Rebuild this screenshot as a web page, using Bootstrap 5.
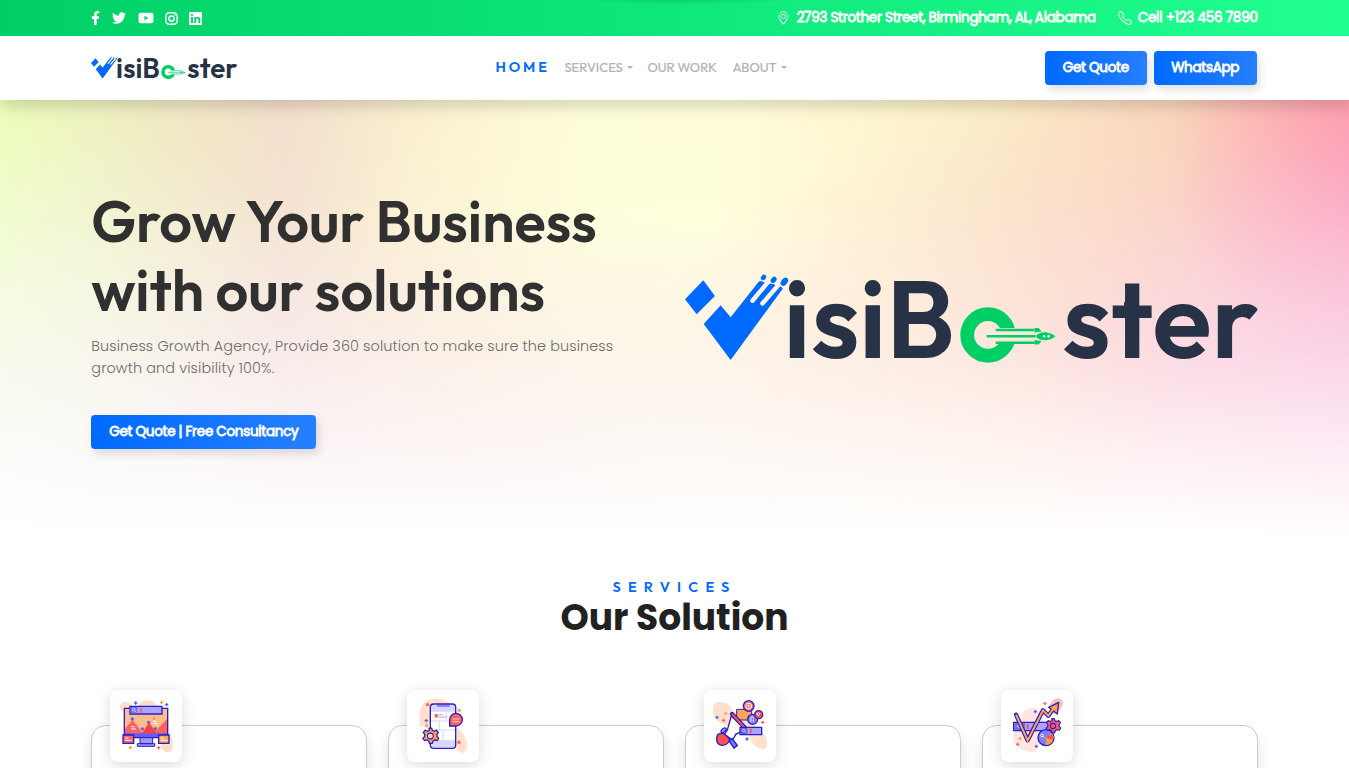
<!DOCTYPE html>
<html lang="en">
<head>
<meta charset="utf-8">
<meta name="viewport" content="width=device-width, initial-scale=1">
<title>VisiBooster</title>
<link href="https://cdn.jsdelivr.net/npm/bootstrap@5.3.0/dist/css/bootstrap.min.css" rel="stylesheet">
<style>
html{font-size:14.4px}
body{font-family:Poppins,Inter,sans-serif;color:#212121;background:#fff;overflow:hidden;height:768px}
.container{max-width:1188px}
.outfit{font-family:Outfit,Lato,sans-serif}
.topbar{height:36px;background:radial-gradient(ellipse 110px 4px at 683px 0,rgba(0,60,30,.15),transparent),linear-gradient(90deg,#00cf65,#1fff8f);color:#fff;font-size:13.5px;-webkit-text-stroke:.8px #fff;position:relative;z-index:3}
.topbar svg{fill:#fff;display:block}
.addr{letter-spacing:-.28px}
.cell{letter-spacing:-.22px}
.mainbar{height:64px;box-shadow:0 7px 14px rgba(0,0,0,.15);z-index:2}
.mainbar .nav-link{font-size:13px;color:#b3b3b3;padding:0;-webkit-text-stroke:.2px #b3b3b3}
.mainbar .nav-link.active{font-size:14.4px;font-weight:600;letter-spacing:2.9px;color:#006aff;-webkit-text-stroke:0}
.mainbar .dropdown-toggle::after{margin-left:4px;border-top-width:3px;border-left-width:3px;border-right-width:3px;vertical-align:3px}
.btn-brand{background:linear-gradient(90deg,#006aff,#267fff);color:#fff;font-size:13.5px;-webkit-text-stroke:.8px #fff;height:34px;padding:0;line-height:33px;border:0;border-radius:4px;box-shadow:3px 5px 8px rgba(0,0,0,.12);letter-spacing:-.28px}
.hero{height:440px;padding-top:85.5px;background:
 linear-gradient(180deg,rgba(255,255,255,0) 0%,rgba(255,255,255,.12) 25%,rgba(255,255,255,.4) 57%,rgba(255,255,255,.73) 80%,#fff 99%),
 radial-gradient(ellipse 400px 340px at 1420px 340px,rgba(244,185,250,.65),transparent),
 radial-gradient(ellipse 230px 250px at 1400px 40px,rgba(255,130,175,.6),transparent),
 radial-gradient(ellipse 560px 300px at 1200px 280px,rgba(252,185,205,.6),transparent),
 radial-gradient(ellipse 600px 280px at 500px 390px,rgba(240,195,228,.5),transparent),
 radial-gradient(ellipse 500px 380px at 0 400px,rgba(245,245,250,.85),transparent),
 linear-gradient(90deg,#ecfdb9 0%,#f1e9c4 13%,#f3decb 21%,#faf0cf 31%,#fefed8 44%,#fffed8 53%,#fbeec6 73%,#fad5b8 88%,#fdb4ae 100%)}
.hero h1{font-size:57.6px;line-height:69.12px;font-weight:600;color:#303030;margin-bottom:12.2px;white-space:nowrap}
.hero p{color:#6c6c6c;font-weight:300;letter-spacing:.12px;margin-bottom:36px;line-height:21.6px;white-space:nowrap}
.services-kicker{font-size:14.4px;line-height:17px;font-weight:600;letter-spacing:7.2px;color:#006aff}
.services-title{font-size:36px;line-height:43.2px;font-weight:700;margin:0}
.solution{height:200px;border:1px solid #ccc;border-radius:14.4px;background:#fff;box-shadow:0 7px 14px rgba(0,0,0,.12);padding-left:18px}
.tile{width:72px;height:72px;margin-top:-36px;border-radius:8px;background:#fff;box-shadow:0 3px 14px rgba(0,0,0,.15)}
.tile svg{display:block;width:72px;height:72px}
</style>
</head>
<body>
<svg width="0" height="0" class="position-absolute" aria-hidden="true">
 <defs>
  <mask id="slots" maskUnits="userSpaceOnUse" x="0" y="0" width="120" height="90"><rect width="120" height="90" fill="#fff"/><path d="M84 7 67.5 26.7M93.5 11 77.5 29.5" stroke="#000" stroke-width="4.4" stroke-linecap="round"/></mask>
  <mask id="trail" maskUnits="userSpaceOnUse" x="270" y="25" width="80" height="70"><rect x="270" y="25" width="80" height="70" fill="#fff"/><path d="M314 54h22v16h-22z" fill="#000"/></mask>
  <symbol id="logo" viewBox="0 0 573 90">
   <g fill="#006aff"><path d="M18.3 6.3 30 22 11.7 40.3 0 25.3zM98 14.5 45.7 86 18.7 50 35.7 31.3 45.7 43.3 73.5 8Q76 5.5 79 8.500L88 10Q90 10 91 12Q96 11 98 14.500z" mask="url(#slots)"/>
   <ellipse cx="78.600" cy="3.400" rx="3" ry="2.400" transform="rotate(-50 78.600 3.400)"/><ellipse cx="88.700" cy="5.800" rx="3.500" ry="2.600" transform="rotate(-50 88.700 5.800)"/><ellipse cx="99.500" cy="7.700" rx="4.600" ry="3" transform="rotate(-50 99.500 7.700)"/></g>
   <g fill="#273247" font-family="Outfit,Lato,sans-serif" font-weight="600" font-size="109"><text y="84" x="98.500 126.500 174.500 201.500">isiB</text><text y="84" x="378 426.500 468 527">ster</text></g>
   <path d="M439.500 28.700 454 10.700v22h-14.500z" fill="#273247"/>
   <circle cx="303.300" cy="61" r="20.800" fill="none" stroke="#00cf65" stroke-width="13.800" mask="url(#trail)"/>
   <path d="M311 56h39M302 62.300h49M311 68.700h39" stroke="#00cf65" stroke-width="2.500"/>
   <path d="M351 62.300q3-4.500 11-4 5 .8 9 4-4 3.500-9 4-8 .5-11-4zM350 54h4l3 3.500-7 1zM350 70.500h4l3-3.500-7-1z" fill="#00cf65"/><circle cx="359.500" cy="62.300" r="1.300" fill="#fff"/><circle cx="364" cy="62.300" r="1.300" fill="#fff"/>
  </symbol>
  <symbol id="gear" viewBox="-12 -12 24 24"><path d="M-1.800-10.500h3.600l.9 3 2.600 1.200 2.900-1.600 2.500 3.200-2 2.700.3 2.800 2.300 2.300-2.200 3-3-.9-2.700 1.700-1 3h-3.500l-1-3-2.600-1.700-3 .9-2.300-3 2.300-2.300.3-2.800-2-2.700 2.500-3.200 2.900 1.600 2.600-1.200z" stroke="#2a1fc4" stroke-width="1.700" stroke-linejoin="round"/><circle r="3.800" fill="none" stroke="#2a1fc4" stroke-width="1.500"/></symbol>
 </defs>
</svg>

<div class="topbar d-flex align-items-center">
 <div class="container d-flex justify-content-between align-items-center">
  <div class="d-flex align-items-center">
   <svg width="9" height="14" viewBox="0 0 320 512" style="margin-right:12px"><path d="M279 288l14-93h-89v-60c0-25 12-50 52-50h41V7s-37-7-72-7c-73 0-121 44-121 125v70H23v93h81v224h100V288z"/></svg>
   <svg width="14" height="14" viewBox="0 0 512 512" style="margin-right:12px"><path d="M459 152v14c0 138-106 298-299 298-59 0-115-17-160-47 8 1 16 1 25 1 49 0 94-17 130-45-46-1-85-31-98-73 7 1 13 2 20 2 9 0 19-1 28-4-48-10-84-52-84-103v-1c14 8 30 13 47 13-28-19-47-51-47-87 0-19 5-37 14-53 52 64 129 105 216 110-2-8-3-16-3-24 0-58 47-105 105-105 30 0 58 13 77 33 24-5 46-13 66-25-8 24-24 45-46 58 21-2 42-8 61-16-14 21-32 39-52 54z"/></svg>
   <svg width="16" height="14" viewBox="0 0 576 512" style="margin-right:11px"><path fill-rule="evenodd" d="M90 64h396c44 0 75 24 75 70v244c0 46-31 70-75 70H90c-44 0-75-24-75-70V134c0-46 31-70 75-70zm142 109v166l145-83z"/></svg>
   <svg width="13" height="13" viewBox="0 0 26 26" style="margin-right:11px"><rect x="1.500" y="1.500" width="23" height="23" rx="7" fill="none" stroke="#fff" stroke-width="3"/><circle cx="13" cy="13" r="5.200" fill="none" stroke="#fff" stroke-width="3"/><circle cx="20" cy="6" r="1.600"/></svg>
   <svg width="13" height="13" viewBox="0 0 26 26"><path fill-rule="evenodd" d="M1 0h24a1 1 0 0 1 1 1v24a1 1 0 0 1-1 1H1a1 1 0 0 1-1-1V1a1 1 0 0 1 1-1zm3 10v12h4V10zm2-6a2.200 2.200 0 1 0 0 4.400A2.200 2.200 0 0 0 6 4zm4.500 6v12h4v-6c0-4 4-4 4 0v6h4v-7c0-7-6-6.500-8-3.500V10z"/></svg>
  </div>
  <div class="d-flex align-items-center">
   <svg width="13" height="14" viewBox="0 0 16 16" style="margin-right:7px"><path d="M12.166 8.940c-.524 1.062-1.234 2.120-1.960 3.070A32 32 0 0 1 8 14.580a32 32 0 0 1-2.206-2.570c-.726-.950-1.436-2.008-1.960-3.070C3.304 7.867 3 6.862 3 6a5 5 0 0 1 10 0c0 .862-.305 1.867-.834 2.940M8 16s6-5.686 6-10A6 6 0 0 0 2 6c0 4.314 6 10 6 10"/><path d="M8 8a2 2 0 1 1 0-4 2 2 0 0 1 0 4m0 1a3 3 0 1 0 0-6 3 3 0 0 0 0 6"/></svg>
   <span class="addr">2793 Strother Street, Birmingham, AL, Alabama</span>
   <svg width="14" height="14" viewBox="0 0 16 16" style="margin:0 6px 0 22px"><path d="M3.654 1.328a.678.678 0 0 0-1.015-.063L1.605 2.300c-.483.484-.661 1.169-.450 1.770a17.600 17.600 0 0 0 4.168 6.608 17.600 17.600 0 0 0 6.608 4.168c.601.211 1.286.033 1.770-.450l1.034-1.034a.678.678 0 0 0-.063-1.015l-2.307-1.794a.680.680 0 0 0-.580-.122l-2.190.547a1.750 1.750 0 0 1-1.657-.459L5.482 8.062a1.750 1.750 0 0 1-.460-1.657l.548-2.190a.680.680 0 0 0-.122-.580zM1.884.511a1.745 1.745 0 0 1 2.612.163L6.290 2.980c.329.423.445.974.315 1.494l-.547 2.190a.680.680 0 0 0 .178.643l2.457 2.457a.680.680 0 0 0 .644.178l2.189-.547a1.750 1.750 0 0 1 1.494.315l2.306 1.794c.829.645.905 1.870.163 2.611l-1.034 1.034c-.740.740-1.846 1.065-2.877.702a18.600 18.600 0 0 1-7.010-4.420 18.600 18.600 0 0 1-4.420-7.009c-.362-1.030-.037-2.137.703-2.877z"/></svg>
   <span class="cell">Cell +123 456 7890</span>
  </div>
 </div>
</div>

<nav class="mainbar navbar navbar-expand bg-white p-0">
 <div class="container d-flex justify-content-between">
  <a class="navbar-brand p-0 m-0" href="#"><svg width="146" height="24" class="d-block"><use href="#logo"/></svg></a>
  <div class="d-flex align-items-center outfit">
   <a class="nav-link active" style="width:69px" href="#">HOME</a>
   <a class="nav-link dropdown-toggle" style="width:83px" href="#">SERVICES</a>
   <a class="nav-link" style="width:85px" href="#">OUR WORK</a>
   <a class="nav-link dropdown-toggle" href="#">ABOUT</a>
  </div>
  <div class="d-flex" style="gap:7px;margin-right:1px"><a class="btn btn-brand" style="width:102px" href="#">Get Quote</a><a class="btn btn-brand" style="width:103px" href="#">WhatsApp</a></div>
 </div>
</nav>

<section class="hero">
 <div class="container">
  <div class="row align-items-center">
   <div class="col-6">
    <h1 class="outfit">Grow Your Business<br>with our solutions</h1>
    <p>Business Growth Agency, Provide 360 solution to make sure the business<br>growth and visibility 100%.</p>
    <a class="btn btn-brand d-block" style="width:225px" href="#">Get Quote | Free Consultancy</a>
   </div>
   <div class="col-6"><svg class="w-100 d-block" style="margin-top:3px" height="90" viewBox="0 0 573 90"><use href="#logo" width="573" height="90"/></svg></div>
  </div>
 </div>
</section>

<section style="padding-top:39px">
 <div class="container text-center">
  <div class="services-kicker outfit">SERVICES</div>
  <h2 class="services-title">Our Solution</h2>
 </div>
 <div class="container" style="margin-top:86px">
  <div class="row">
   <div class="col-3"><div class="solution"><div class="tile">
    <svg viewBox="0 0 216 216"><path d="M30 46c8-16 35-12 40 8l10 10H48c-12 0-22-8-18-18zM84 50c8-26 50-26 58 0v15H84zM165 125c20 0 28 30 22 55-12 12-30 4-35-10z" fill="#fddfc9"/>
    <path d="M43 55h130v84H43z" fill="#ffbd8a"/><path d="M43 118l25-28 29 38 20-30 20 25 36-38v55H43z" fill="#ff6262"/><path d="M97 130l20-32 22 32z" fill="#ff4141"/><path d="M43 130h130v13H43z" fill="#655df5"/><path d="M43 55h130v88H43z" fill="none" stroke="#2a1fc4" stroke-width="4"/>
    <path d="M90 143h38v18H90zM82 161h52v8H82z" fill="#9e99fb" stroke="#2a1fc4" stroke-width="3"/><path d="M60 49h96v23H60z" fill="#aaa6ff" stroke="#2a1fc4" stroke-width="4"/><path d="M62 51h20v19H62z" fill="#746df5"/><circle cx="71" cy="59" r="4" fill="none" stroke="#fff" stroke-width="2"/><path d="m74 62 5 5" stroke="#fff" stroke-width="2"/><path d="M90 54h6v14h-6z" fill="#ff6262"/>
    <path d="M39 135h32v25H39z" fill="#ff6262" stroke="#2a1fc4" stroke-width="4"/><path d="M146 135h31v25h-31z" fill="#ffa750" stroke="#2a1fc4" stroke-width="4"/><path d="M45 144h11m-11 7h20M152 144h11m-11 7h20M63 110h10m-10 7h15M129 94h10m-10 7h15" stroke="#fff" stroke-width="3"/>
    <g fill="#655df5"><circle cx="67" cy="87" r="5"/><circle cx="97" cy="117" r="5"/><circle cx="116" cy="97" r="5"/><circle cx="136" cy="116" r="5"/></g><path d="M77 34v10m-5-5h10M170 39v10m-5-5h10" stroke="#655df5" stroke-width="4"/><path d="M155 32v10m-5-5h10M61 168v10m-5-5h10" stroke="#ffa03c" stroke-width="4"/><path d="M146 168v10m-5-5h10M131 83v6" stroke="#ff6262" stroke-width="4"/></svg></div></div></div>
   <div class="col-3"><div class="solution"><div class="tile">
    <svg viewBox="0 0 216 216"><path d="M38 75c2-60 65-58 92-33l5 30-97 40zM145 110c25 15 50 60 25 78-16 4-30-15-30-40z" fill="#fee0cc"/><rect x="70" y="42" width="76" height="133" rx="10" fill="#fff"/><path d="M72 65V52q0-8 8-8h56q8 0 8 8v13zM72 152h72v15q0 6-8 6H80q-8 0-8-6z" fill="#d9d6ff"/><path d="M90 43h38v8H90z" fill="#8a83fa"/><path d="M72 93h72M72 120h72M72 151h72M97 93v27M108 121v30M119 66v26" stroke="#d9d6ff" stroke-width="3"/><path d="M96 74h12m-12 7h24" stroke="#aaa6ff" stroke-width="3"/><rect x="70" y="42" width="76" height="133" rx="10" fill="none" stroke="#2a1fc4" stroke-width="4"/>
    <circle cx="88" cy="77" r="6" fill="#ff6262"/><path d="M128 108V90a19 19 0 1 1 19 18z" fill="#ff6262" stroke="#2a1fc4" stroke-width="4"/><path d="M137 87h20m-20 8h20" stroke="#ffd5d5" stroke-width="3"/><use href="#gear" x="43" y="111" width="54" height="54" fill="#ffa03c"/><circle cx="70" cy="138" r="7" fill="#d9d6ff"/>
    <path d="M62 39v9m-5-4h10M156 152v10m-5-5h10" stroke="#ff6262" stroke-width="5"/><path d="M157 56v10m-5-5h10M59 102v10m-5-5h10" stroke="#ffa03c" stroke-width="5"/><path d="M58 87v10m-5-5h10" stroke="#655df5" stroke-width="4"/></svg></div></div></div>
   <div class="col-3"><div class="solution"><div class="tile">
    <svg viewBox="0 0 216 216"><path d="M27 55c0-30 50-20 55 2 20 30 95 45 107 95 3 20-5 32-25 22-35-20-30-60-65-62-35 2-75-20-72-57z" fill="#fee0cc"/><path d="M98 58h45v32H98z" fill="#ffa750" stroke="#2a1fc4" stroke-width="3"/><circle cx="134" cy="48" r="16" fill="#ff6262" stroke="#2a1fc4" stroke-width="4"/><circle cx="134" cy="48" r="9" fill="none" stroke="#fff" stroke-width="3"/><path d="M125 48h18m-9-9v18" stroke="#fff" stroke-width="2"/>
    <path d="M82 78 70 120l-9 13 25 17 9-17 31-16z" fill="#fff" stroke="#2a1fc4" stroke-width="4"/><path d="m84 72 40 43" stroke="#2a1fc4" stroke-width="13" stroke-linecap="round"/><path d="m84 72 40 43" stroke="#ff5050" stroke-width="6"/><circle cx="146" cy="88" r="15" fill="#837cf5" stroke="#2a1fc4" stroke-width="4"/><path d="M141 81h6v14m-6 0v-14" stroke="#fff" stroke-width="3"/><circle cx="164" cy="74" r="12" fill="#ff5050" stroke="#2a1fc4" stroke-width="4"/><circle cx="163" cy="72" r="4" fill="none" stroke="#fff" stroke-width="3"/><path d="m75 153 10-7 15 20-10 9z" fill="#746df5" stroke="#2a1fc4" stroke-width="4"/><ellipse cx="59" cy="121" rx="9" ry="5" fill="#aaa6ff" stroke="#2a1fc4" stroke-width="4" transform="rotate(-40 59 121)"/><path d="M42 133q14-7 23 2l12 13q-5 18-23 18-16-2-16-19 0-10 4-14z" fill="#ff5050" stroke="#2a1fc4" stroke-width="4"/>
    <path d="M108 112h65v22h-65z" fill="#aaa6ff" stroke="#2a1fc4" stroke-width="4"/><path d="M110 114h20v18h-20z" fill="#655df5"/><circle cx="119" cy="121" r="3.500" fill="none" stroke="#fff" stroke-width="2"/><path d="m122 124 4 4" stroke="#fff" stroke-width="2"/><path d="M137 116h6v14h-6z" fill="#ff5050"/><path d="M39 77v10m-5-5h10M129 142v10m-5-5h10" stroke="#655df5" stroke-width="4"/><path d="M59 86v10m-5-5h10M176 92v10m-5-5h10" stroke="#ff6262" stroke-width="4"/><path d="M65 65v10m-5-5h10" stroke="#ffa03c" stroke-width="4"/></svg></div></div></div>
   <div class="col-3"><div class="solution"><div class="tile">
    <svg viewBox="0 0 216 216"><path d="M62 90c-6-40 50-50 60-12l18 36-35 72c-30 4-75-15-68-55z" fill="#ffe6e3"/><path d="M145 50c8-30 38-32 41-12 0 20-25 36-35 33z" fill="#ffc0bb"/><path d="M38 97h112v25H38z" fill="#aaa6ff" stroke="#2a1fc4" stroke-width="4"/><path d="M40 99h32v21H40z" fill="#746df5"/><circle cx="54" cy="108" r="4" fill="none" stroke="#fff" stroke-width="2.500"/><path d="m57 111 5 5" stroke="#fff" stroke-width="2"/><path d="M77 102h6v15h-6z" fill="#ff5050"/>
    <path d="m45 74 35 77 46-90 16 16 19-26" fill="none" stroke="#2a1fc4" stroke-width="13" stroke-linejoin="round" stroke-linecap="round"/><path d="m173 37-4 35-26-20z" fill="#ffa03c" stroke="#2a1fc4" stroke-width="4" stroke-linejoin="round"/><path d="m45 74 35 77 46-90 16 16 19-26" fill="none" stroke="#ffa750" stroke-width="6"/>
    <circle cx="135" cy="143" r="24" fill="#837cf5" stroke="#2a1fc4" stroke-width="4"/><path d="M135 143v22a22 22 0 0 0 18-35z" fill="#ffa03c"/><path d="m135 143 19-12a22 22 0 0 1 2 18z" fill="#ff5050"/><circle cx="123" cy="136" r="4" fill="none" stroke="#fff" stroke-width="2.500"/><path d="m126 139 5 5" stroke="#fff" stroke-width="2.500"/><use href="#gear" x="131" y="83" width="50" height="50" fill="#ff5a5a"/><path d="M103 60v10m-5-5h10M106 164v10m-5-5h10" stroke="#655df5" stroke-width="4"/><path d="M132 36v9m-5-4h10M50 158v10m-5-5h10" stroke="#ff6262" stroke-width="4"/><path d="M57 141v10m-5-5h10" stroke="#ffa03c" stroke-width="4"/></svg></div></div></div>
  </div>
 </div>
</section>
<script src="https://cdn.jsdelivr.net/npm/bootstrap@5.3.0/dist/js/bootstrap.bundle.min.js"></script>
</body>
</html>
